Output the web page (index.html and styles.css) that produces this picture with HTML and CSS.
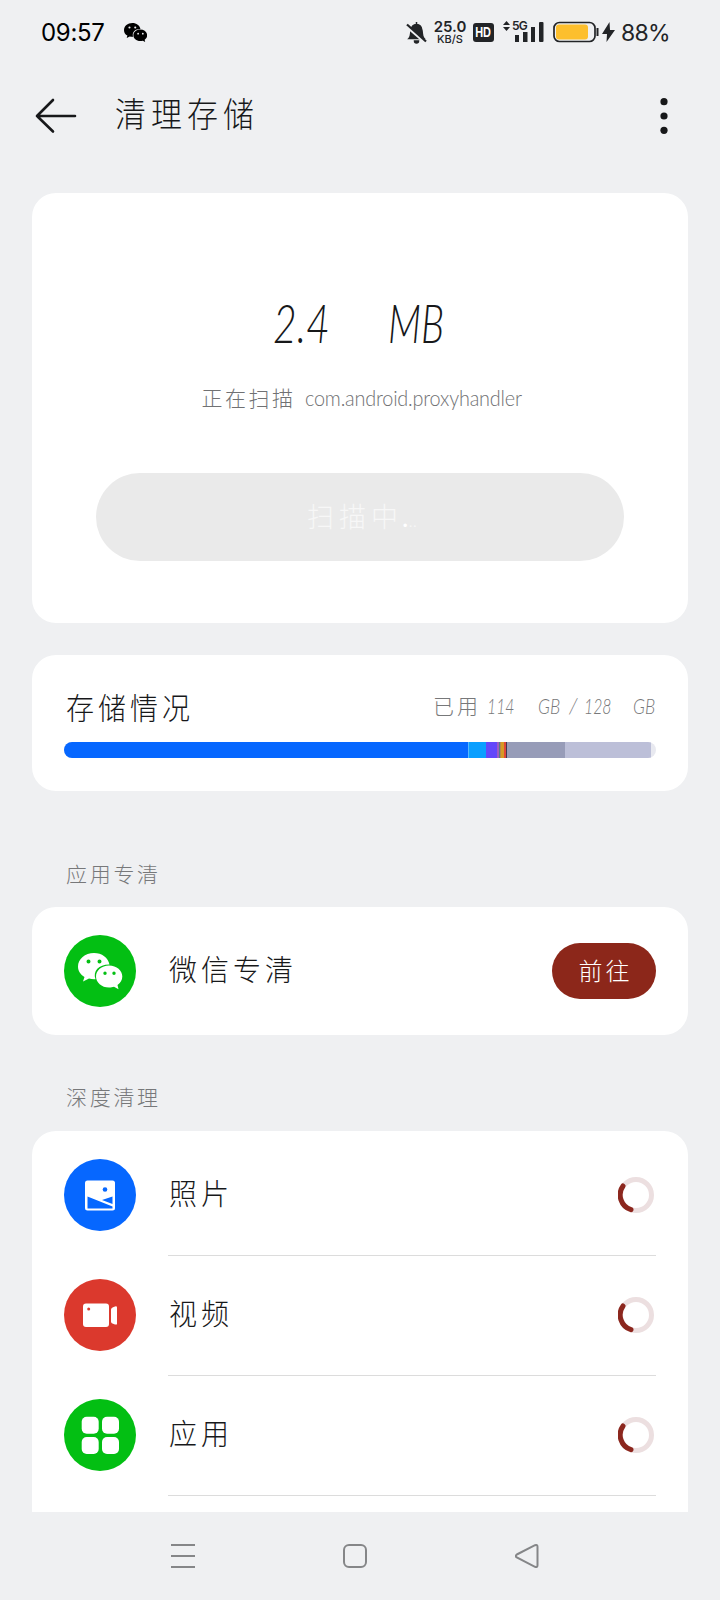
FILE: index.html
```html
<!DOCTYPE html>
<html lang="zh-CN">
<head>
<meta charset="utf-8">
<title>清理存储</title>
<link rel="stylesheet" href="styles.css">
</head>
<body>
<div class="screen">
  <header class="status">
    <span class="clock">09:57</span>
    <svg class="chat" width="23" height="20" viewBox="0 0 44 38"><use href="#wechat"/></svg>
    <div class="indicators">
      <svg class="bell" width="21" height="23" viewBox="0 0 21 23"><path d="M10.500 1v2M3 17.500c2-2 1.500-5 2-8 .5-4.500 2.500-6 5.500-6s5 1.500 5.500 6c.5 3 0 6 2 8zM8.500 20a2 2 0 0 0 4 0z" fill="#222427" stroke="#222427" stroke-width="1.500"/><path d="M1 5.500l18.500 16" stroke="#eff0f2" stroke-width="3"/><path d="M1 3.500l19 17" stroke="#222427" stroke-width="2.200"/></svg>
      <div class="speed"><span class="rate">25.0</span><span class="unit">KB/S</span></div>
      <span class="hd"><span class="hd-text">HD</span></span>
      <div class="signal">
        <svg width="41" height="24" viewBox="0 0 41 24" fill="#222427"><path d="M0 5l3.500-4L7 5zM0 7h7l-3.500 4z"/><rect x="12" y="15" width="4" height="7"/><rect x="20" y="12" width="4.500" height="10"/><rect x="28" y="7" width="4" height="15"/><rect x="36" y="2" width="4.500" height="20" rx="1"/></svg>
        <span class="net">5G</span>
      </div>
      <svg class="battery" width="46" height="22" viewBox="0 0 46 22"><rect x="1" y="1.500" width="41" height="19" rx="5.500" fill="none" stroke="#222427" stroke-width="1.700"/><rect x="3" y="3.500" width="32" height="15" rx="3" fill="#fdbf2d"/><path d="M44.500 7v8" stroke="#222427" stroke-width="2"/></svg>
      <svg class="bolt" width="13" height="22" viewBox="0 0 13 22"><path d="M7.500 1L0 13h5L4.500 21 13 9H8z" fill="#222427"/></svg>
      <span class="percent">88%</span>
    </div>
  </header>

  <div class="titlebar">
    <svg width="42" height="36" viewBox="0 0 42 36" fill="none" stroke="#17181a" stroke-width="2.600" stroke-linecap="round" stroke-linejoin="round"><path d="M18 2L2 18l16 15.500M2 18h38"/></svg>
    <h1>清理存储</h1>
    <svg class="more" width="8" height="36" viewBox="0 0 8 36" fill="#17181a"><circle cx="4" cy="3.700" r="3.600"/><circle cx="4" cy="18" r="3.600"/><circle cx="4" cy="32.300" r="3.600"/></svg>
  </div>

  <section class="card scan">
    <div class="amount"><span class="value">2.4</span><span class="mb">MB</span></div>
    <p class="scanning"><span>正在扫描</span><span class="package">com.android.proxyhandler</span></p>
    <button class="scan-button">扫描中<span class="dot">.</span><span class="faint">..</span></button>
  </section>

  <section class="card storage">
    <div class="storage-head">
      <h2>存储情况</h2>
      <div class="usage"><span class="used">已用</span><span class="n">114</span><span class="gb">GB</span><span class="slash">/</span><span class="n total">128</span><span class="gb">GB</span></div>
    </div>
    <div class="bar"><i class="b1"></i><i class="b2"></i><i class="b3"></i><i class="b4"></i><i class="b5"></i><i class="b6"></i></div>
  </section>

  <h3 class="label label-app">应用专清</h3>
  <section class="card row wechat">
    <svg class="icon" viewBox="0 0 72 72"><defs><g id="wechat"><path fill-rule="evenodd" d="M16 0C7 0 0 6 0 13.500c0 4.500 2.500 8 6.500 10.500L5 28.500l6-3c2 .6 4 .8 6.500.7C14.500 18 21 11.300 31.500 11.500 30 4.500 24 0 16 0zM10.500 6.500a2 2 0 1 1 0 4 2 2 0 0 1 0-4zM21.500 6.500a2 2 0 1 1 0 4 2 2 0 0 1 0-4z"/><path fill-rule="evenodd" d="M31 12.500c-7.500 0-13 5-13 11s5.500 11 13 11c2 0 3.500-.3 5-.8l4.500 2.500-1-4.200c3-2 4.800-5 4.800-8.500 0-6-5.500-11-13.300-11zM27 18.500a1.700 1.700 0 1 1 0 3.400 1.700 1.700 0 0 1 0-3.400zM36 18.500a1.700 1.700 0 1 1 0 3.400 1.700 1.700 0 0 1 0-3.400z"/></g></defs><circle cx="36" cy="36" r="36" fill="#03bf13"/><use href="#wechat" x="14" y="18" fill="#fff"/></svg>
    <span class="name">微信专清</span>
    <button class="go">前往</button>
  </section>

  <h3 class="label label-deep">深度清理</h3>
  <section class="card deep">
    <div class="row">
      <svg class="icon" viewBox="0 0 72 72"><circle cx="36" cy="36" r="36" fill="#0667ff"/><rect x="21" y="21.500" width="30" height="30" rx="2.500" fill="#fff"/><circle cx="41" cy="30.500" r="2.300" fill="#0667ff"/><path d="M23.500 37.500L48.500 47.500V49.500H23.500zM38 41l10.500-3.500V45z" fill="#0667ff"/></svg>
      <span class="name">照片</span>
      <svg class="spinner" viewBox="0 0 36 36"><circle cx="18" cy="18" r="15.500"/><path d="M5 9A15.500 15.500 0 0 0 13 32.700"/></svg>
    </div>
    <div class="row lined">
      <svg class="icon" viewBox="0 0 72 72"><circle cx="36" cy="36" r="36" fill="#db392d"/><rect x="19" y="24.500" width="26" height="23.500" rx="3" fill="#fff"/><path d="M47 30.500q0-1.500 2-2.300l2-.8q2-.5 2 1v16.500q0 1-2 .5l-2-.7q-2-.5-2-2z" fill="#fff"/><circle cx="24.700" cy="30" r="1.500" fill="#db392d"/></svg>
      <span class="name">视频</span>
      <svg class="spinner" viewBox="0 0 36 36"><circle cx="18" cy="18" r="15.500"/><path d="M5 9A15.500 15.500 0 0 0 13 32.700"/></svg>
    </div>
    <div class="row lined">
      <svg class="icon" viewBox="0 0 72 72"><circle cx="36" cy="36" r="36" fill="#03bf13"/><g fill="#fff"><rect x="17.700" y="17.700" width="17" height="17" rx="5"/><rect x="38" y="17.700" width="17" height="17" rx="5"/><rect x="17.700" y="38" width="17" height="17" rx="5"/><rect x="38" y="38" width="17" height="17" rx="5"/></g></svg>
      <span class="name">应用</span>
      <svg class="spinner" viewBox="0 0 36 36"><circle cx="18" cy="18" r="15.500"/><path d="M5 9A15.500 15.500 0 0 0 13 32.700"/></svg>
    </div>
    <div class="row lined"></div>
  </section>

  <nav class="nav">
    <svg width="24" height="24" viewBox="0 0 24 24"><path d="M0 1h24M0 12h24M0 23h24"/></svg>
    <svg width="24" height="24" viewBox="0 0 24 24"><rect x="1" y="1" width="22" height="22" rx="5"/></svg>
    <svg width="24" height="24" viewBox="0 0 24 24"><path d="M1.800 10.500L20 1.200q2.500-.8 2.500 1.500v18.600q0 2.300-2.500 1.500L1.800 13.500q-2-1.500 0-3z"/></svg>
  </nav>
</div>
</body>
</html>
```
FILE: styles.css
```css
* { box-sizing: border-box; }
body { margin: 0; background: #eff0f2; }
.screen {
  width: 720px;
  height: 1600px;
  overflow: hidden;
  display: flex;
  flex-direction: column;
  color: #17181a;
  font-family: Lato, "Noto Sans CJK SC", sans-serif;
  font-weight: 300;
}
svg { display: block; flex: none; }
h1, h2, h3, p { margin: 0; font-weight: 300; }
button { border: 0; padding: 0; font: inherit; }

.status { height: 64px; flex: none; display: flex; align-items: center; padding: 0 51px 0 41px; color: #000; }
.clock { width: 65px; padding-top: 2px; font: 400 24px/30px Inter, sans-serif; letter-spacing: -0.3px; white-space: nowrap; }
.chat { margin-left: 18px; margin-top: 1px; }
.indicators { margin-left: auto; display: flex; align-items: center; color: #222427; }
.speed { width: 34px; margin-left: 6px; display: flex; flex-direction: column; align-items: center; font-family: Inter, sans-serif; font-weight: 600; white-space: nowrap; }
.rate { font-size: 15px; line-height: 14px; }
.unit { font-size: 11px; line-height: 11px; font-weight: 500; }
.hd { width: 21px; height: 19px; margin-left: 6px; border-radius: 3px; background: #222427; color: #fff; font: 700 14px/19px "Liberation Sans", sans-serif; display: flex; justify-content: center; }
.hd-text { transform: scaleX(.78); }
.signal { position: relative; margin-left: 9px; }
.net { position: absolute; left: 9px; top: 0; background: #eff0f2; font: 600 12px/12px Inter, sans-serif; letter-spacing: -0.8px; }
.battery { margin-left: 9px; }
.bolt { margin-left: 3px; }
.percent { width: 48px; margin-left: 6px; padding-top: 2px; font: 400 23px/30px Inter, sans-serif; letter-spacing: -0.7px; white-space: nowrap; }

.titlebar { height: 104px; flex: none; display: flex; align-items: center; padding: 0 52px 0 35px; }
h1 { margin-left: 38px; font-size: 31px; line-height: 40px; letter-spacing: 5px; transform: translateY(-2px) scaleY(1.1); }
.more { margin-left: auto; }

.card { flex: none; margin: 0 32px; background: #fff; border-radius: 24px; }
.scan { height: 430px; margin-top: 25px; padding-top: 100px; }
.amount { height: 60px; display: flex; justify-content: center; gap: 62px; font: italic 300 53px/60px Lato, sans-serif; }
.value { width: 53px; transform: translateX(-3px) scaleX(.77); transform-origin: left; white-space: nowrap; }
.mb { width: 54px; transform: translateX(-3px) scaleX(.74); transform-origin: left; white-space: nowrap; }
.scanning { height: 30px; margin-top: 30px; display: flex; justify-content: center; font-size: 21px; line-height: 30px; letter-spacing: 2.500px; color: #707173; }
.package { width: 215px; margin-left: 8px; letter-spacing: -0.2px; white-space: nowrap; transform: translateX(1px) scaleX(.945); transform-origin: left; }
.scan-button { display: block; width: 528px; height: 88px; margin: 60px auto 0; padding: 0 0 3px 4px; border-radius: 44px; background: #eaeaea; color: #f7f7f7; font-size: 27px; letter-spacing: 5px; }
.dot { color: #fff; margin-left: -1px; letter-spacing: 0; font-weight: 400; }
.faint { letter-spacing: 0; font-size: 18px; }

.storage { height: 136px; margin-top: 32px; padding: 32px 32px 0; }
.storage-head { height: 40px; display: flex; justify-content: space-between; align-items: center; }
h2 { margin-left: 2px; font-size: 28px; letter-spacing: 4px; transform: translateY(-1px) scaleY(1.06); }
.usage { display: flex; font: italic 300 21px/30px Lato, "Noto Sans CJK SC", sans-serif; color: #77787a; white-space: nowrap; transform: translateY(-1px); }
.used { width: 53px; font-style: normal; letter-spacing: 3px; transform: translateX(-2px); }
.n { width: 50px; transform: translateX(-1px) scaleX(.75); transform-origin: left; }
.gb { width: 23px; transform: scaleX(.83); transform-origin: left; }
.slash { width: 16px; margin-left: 8px; }
.total { width: 48px; }
.bar { height: 16px; margin-top: 15px; border-radius: 8px; overflow: hidden; display: flex; background: #e8e9f0; }
.b1 { width: 404px; background: #0667ff; }
.b2 { width: 18px; background: #0a9fff; border-left: 1px solid #55b8ff; }
.b3 { width: 11px; background: #6347fa; }
.b4 { width: 10px; background: linear-gradient(90deg, #a05cc0 0 2px, #527b8a 2px 3px, #b58a4a 3px 4px, #d79a24 4px 7px, #e0473a 7px 9px, #44384c 9px); }
.b5 { width: 58px; background: #979cb8; }
.b6 { width: 86px; background: #bcbfd8; }

.label { flex: none; height: 32px; margin-left: 66px; font-size: 21px; line-height: 32px; letter-spacing: 2.700px; color: #77787a; }
.label-app { margin-top: 67px; }
.label-deep { margin-top: 46px; }
.row { display: flex; align-items: center; }
.icon { width: 72px; height: 72px; }
.name { margin-left: 33px; font-size: 28px; line-height: 40px; letter-spacing: 4px; transform: translateY(-1px) scaleY(1.04); }
.wechat { height: 128px; margin-top: 17px; padding: 0 32px; }
.go { width: 104px; height: 56px; margin-left: auto; padding: 0 0 3px 3px; border-radius: 28px; background: #8c271a; color: #fff; font-size: 24px; letter-spacing: 3px; }
.deep { height: 381px; margin-top: 18px; padding: 4px 32px 0; border-radius: 24px 24px 0 0; overflow: hidden; }
.deep .row { height: 120px; }
.lined { background: linear-gradient(#dcdcdc, #dcdcdc) 104px 0 / 488px 1px no-repeat; }
.spinner { width: 36px; height: 36px; margin-left: auto; margin-right: 2px; fill: none; stroke-width: 5; stroke: #ecdfe0; }
.spinner path { stroke: #8c271e; stroke-linecap: round; }

.nav { height: 88px; flex: none; padding: 32px 181px 0 171px; display: flex; justify-content: space-between; }
.nav svg { fill: none; stroke: #858688; stroke-width: 2; }
```
